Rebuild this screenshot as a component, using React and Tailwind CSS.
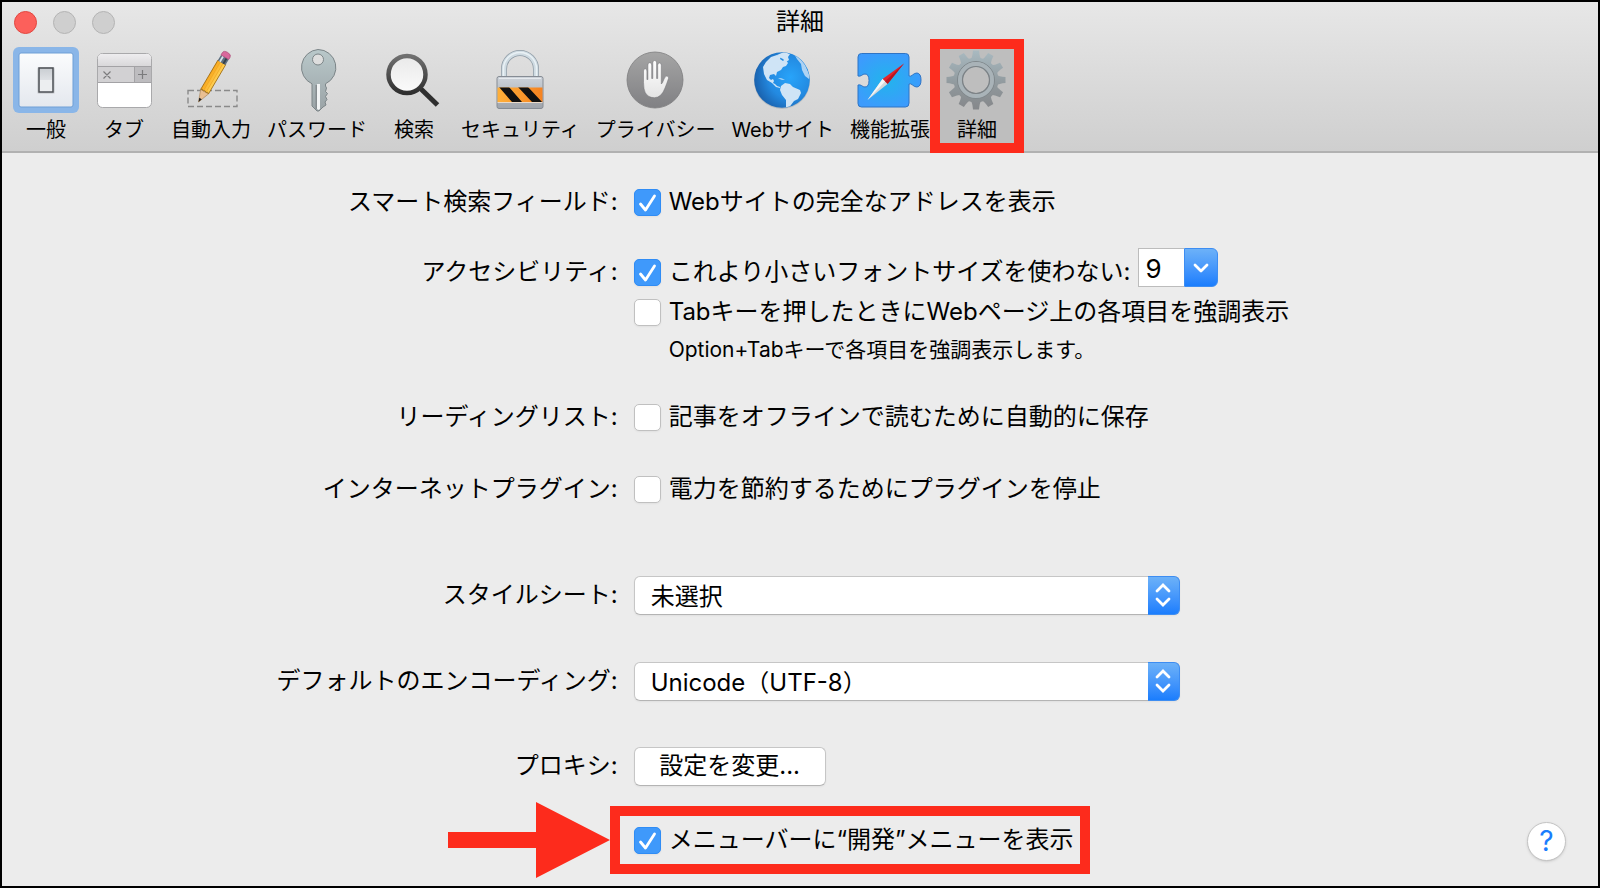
import { useState } from "react"
import clsx from "clsx"

function Icon({ children }) {
  return (
    <svg viewBox="0 0 66 66" className="h-[66px] w-[66px] shrink-0 overflow-visible" aria-hidden="true">
      {children}
    </svg>
  )
}

function Gradient({ id, from, to, x2 = 0, y2 = 1 }) {
  return (
    <linearGradient id={id} x1="0" y1="0" x2={x2} y2={y2}>
      <stop offset="0" stopColor={from} />
      <stop offset="1" stopColor={to} />
    </linearGradient>
  )
}

function GeneralIcon() {
  return (
    <Icon>
      <defs>
        <Gradient id="plate" from="#fbfcfd" to="#e4e8ee" />
        <Gradient id="knob" from="#c9cdd2" to="#f4f5f7" />
      </defs>
      <rect width="66" height="66" rx="6" fill="#8ab6e8" />
      <rect x="6" y="6" width="54" height="54" rx="2" fill="url(#plate)" stroke="#6f9fd6" />
      <rect x="24" y="20" width="18" height="27" rx="2" fill="#c5c8cc" opacity="0.6" />
      <rect x="26" y="21" width="14" height="24" fill="url(#knob)" stroke="#4b4f54" strokeWidth="1.5" />
      <path d="M27 33h12v11H27z" fill="#eceef0" />
    </Icon>
  )
}

function TabsIcon() {
  return (
    <Icon>
      <defs>
        <Gradient id="tabTop" from="#eeedef" to="#d9d8da" />
      </defs>
      <rect x="6.5" y="6.5" width="54" height="54" rx="5" fill="#fff" stroke="#a9a9ab" />
      <path d="M7 19V11q0-4 4-4h45q4 0 4 4v8z" fill="url(#tabTop)" />
      <path d="M7 20h37v15H7z" fill="#d2d1d3" />
      <path d="M44 20h16v15H44z" fill="#bdbcbf" />
      <path d="M7 19.5h53M7 35.5h53M43.500 20v15" stroke="#a3a2a5" fill="none" />
      <path d="M12.500 24.500l7 7m0-7l-7 7M47 27.500h9m-4.500-4.500v9" stroke="#7b7b7d" strokeWidth="1.2" fill="none" />
    </Icon>
  )
}

function AutofillIcon() {
  return (
    <Icon>
      <defs>
        <Gradient id="pencil" from="#f9a71c" to="#ffd257" x2={1} y2={0} />
      </defs>
      <rect x="10" y="43.500" width="49" height="16" fill="none" stroke="#8a8a8a" strokeWidth="1.4" strokeDasharray="6 3" />
      <g transform="translate(20.500 55) rotate(30.500)">
        <path d="M0 0L-4.500-12H4.500z" fill="#e9bf92" stroke="#a9855c" strokeWidth="0.600" />
        <path d="M0 0L-1.500-4H1.500z" fill="#222" />
        <path d="M-4.500-12l1.500-1 1.500 1 1.500-1 1.500 1 1.500-1 1.500 1V-46h-9z" fill="url(#pencil)" stroke="#a06c10" strokeWidth="0.800" />
        <path d="M-1.500-13V-46M1.500-13V-46" stroke="#eda21c" strokeWidth="0.600" />
        <rect x="-4.500" y="-52" width="9" height="6.500" fill="#5d6f80" />
        <path d="M-2-52v6.500" stroke="#d8e2ea" strokeWidth="1.800" />
        <path d="M2-52v6.500" stroke="#35404a" strokeWidth="1.800" />
        <path d="M-4.500-52v-2.500q0-3 4.500-3t4.500 3v2.500z" fill="#d9689c" stroke="#a64370" strokeWidth="0.600" />
      </g>
    </Icon>
  )
}

function PasswordIcon() {
  return (
    <Icon>
      <defs>
        <Gradient id="key" from="#b9c8ca" to="#9aa3a6" />
      </defs>
      <path
        fillRule="evenodd"
        d="M34 2.500a18 18 0 0 1 7.500 34.300V39l1 2-1 3.500 2 2-2 3 1.500 3-2 2.500 1 3-3 2-4 4h-2l-5-5V36.800A18 18 0 0 1 34 2.500zm0 4.500a5.500 5.500 0 1 0 0 11 5.500 5.500 0 0 0 0-11z"
        fill="url(#key)"
        stroke="#7c8588"
      />
      <path d="M31.500 38h1.500v24h-1.500z" fill="#858c8f" />
      <path d="M33 37h3v25l-1.500 1L33 62z" fill="#f1f3f4" />
    </Icon>
  )
}

function SearchIcon() {
  return (
    <Icon>
      <defs>
        <Gradient id="lens" from="#e9e9e9" to="#fbfbfb" />
        <Gradient id="rim" from="#707070" to="#2f2f2f" />
      </defs>
      <path d="M40 42L56.500 58" stroke="#2f2f2f" strokeWidth="5" />
      <circle cx="26" cy="27.500" r="18.500" fill="url(#lens)" stroke="url(#rim)" strokeWidth="4.500" />
    </Icon>
  )
}

function SecurityIcon() {
  return (
    <Icon>
      <defs>
        <Gradient id="lockBody" from="#cdd3da" to="#9fa4ab" />
        <Gradient id="hazard" from="#ffb03a" to="#f58220" x2={1} y2={0} />
        <clipPath id="band">
          <path d="M10.500 40.500h45v14.500h-45z" />
        </clipPath>
      </defs>
      <path d="M17 32V22a16 16 0 0 1 32 0v10" fill="none" stroke="#8f9ba5" strokeWidth="6" />
      <path d="M17 32V22a16 16 0 0 1 32 0v10" fill="none" stroke="#cfdbe2" strokeWidth="4.500" />
      <path d="M16.500 32V22a16.500 16.500 0 0 1 33 0v10" fill="none" stroke="#e9f1f5" strokeWidth="1.500" />
      <rect x="10" y="29.500" width="46" height="32" rx="2" fill="url(#lockBody)" stroke="#868c94" />
      <path d="M12 31.500h42" stroke="#e6eaee" />
      <g clipPath="url(#band)">
        <path d="M10 40h46v15H10z" fill="url(#hazard)" />
        <path d="M12 40h10l13 15H25zM31 40h10l14 15H45z" fill="#111" />
      </g>
      <path d="M10.500 55.500h45" stroke="#e9d9c8" />
    </Icon>
  )
}

function PrivacyIcon() {
  return (
    <Icon>
      <defs>
        <Gradient id="disc" from="#a5a5a5" to="#808083" />
        <Gradient id="palm" from="#fff" to="#e4e4e4" />
      </defs>
      <circle cx="32" cy="33" r="28" fill="url(#disc)" stroke="#7d7d7f" strokeWidth="0.800" />
      <path
        d="M20.500 24q0-2.200 1.700-2.200t1.700 2.200v8.500h1V18q0-2.300 1.900-2.300t1.900 2.300v13.500h1.100V15.800q0-2.300 1.900-2.300t1.900 2.300v15.700h1.100V18.300q0-2.300 1.800-2.300t1.800 2.300V37q1.200-.6 2.300-4 1.500-4.200 3.200-3.900 2.400.2 1.700 2.400-1.500 4.500-3.500 9.500-3.500 9.500-10.500 9.700-6.500 0-9.300-5.200-1.500-3-1.700-10z"
        fill="url(#palm)"
        stroke="#6f6f72"
        strokeWidth="0.500"
      />
    </Icon>
  )
}

function GlobeIcon() {
  return (
    <Icon>
      <defs>
        <radialGradient id="sea" cx="0.650" cy="0.450" r="0.650">
          <stop offset="0" stopColor="#28a4fa" />
          <stop offset="0.600" stopColor="#2389e0" />
          <stop offset="1" stopColor="#1a62ae" />
        </radialGradient>
        <clipPath id="world">
          <circle cx="32" cy="33" r="27.500" />
        </clipPath>
      </defs>
      <circle cx="32" cy="34" r="28" fill="#9aa3ac" opacity="0.500" />
      <circle cx="32" cy="33" r="27.800" fill="url(#sea)" />
      <g clipPath="url(#world)" fill="#cfe4f6">
        <path d="M16 15l5-5 6-2 4 1-1 3 3 2 2-2 3 4-2 3-3 1-2 3-4 2-1 4-2-2-4 1-1 3 2 2 2-1 1 2-1 2 2 1 2 2 3 1v1l-4-1-4-4-5-3-3-6-1-7z" />
        <path d="M27 8l7-3 6 2-2 3 1 3-3 2-3-3-4-2z" />
        <path d="M44 7l5 3 6 8 4 9v5l-4-3-3-6-1-6-4-5z" opacity="0.800" />
        <path d="M28 31l4 .5 3 1.500-4-.5z" />
        <path d="M31 39l4-3 5 1 3 3 7 3 1 3-3 6-4 2-3 4-3 4-2-1v-8l-4-5-2-5z" />
      </g>
    </Icon>
  )
}

function ExtensionsIcon() {
  return (
    <Icon>
      <defs>
        <radialGradient id="piece" cx="0.450" cy="0.500" r="0.550">
          <stop offset="0" stopColor="#22b4ec" />
          <stop offset="1" stopColor="#3c9bfd" />
        </radialGradient>
      </defs>
      <path
        d="M4.500 6.500h44q3.500 0 3.500 3.500v19q1.800.800 3.500-1 2-2 4.500-2 4 .500 4 7t-4 7q-2.500 0-4.500-2-1.700-1.800-3.500-1v19q0 4-3.500 4h-44Q1 60 1 56.500V38q1.800-.500 3.500.500 1.500 1.500 3.500 1.500 4 0 4-6.500T8 27q-2 0-3.500 1.500Q2.800 29.500 1 29V10q0-3.500 3.500-3.500z"
        fill="url(#piece)"
        stroke="#2f74c4"
      />
      <path d="M47 16.500L30.500 37l-5-5z" fill="#e2242c" />
      <path d="M47 16.500L30.500 37l-2.500-2.500z" fill="#b81620" />
      <path d="M10.500 53l15-21 5 5z" fill="#d5d8da" />
      <path d="M10.500 53l15-21 2.500 2.500z" fill="#f6f7f7" />
    </Icon>
  )
}

const gearTeeth = Array.from({ length: 12 }, (_, i) => i * 30)

function AdvancedIcon() {
  return (
    <Icon>
      <defs>
        <linearGradient id="steel" gradientUnits="userSpaceOnUse" x1="0" y1="-30" x2="0" y2="30">
          <stop offset="0" stopColor="#a9bac1" />
          <stop offset="0.6" stopColor="#8f979b" />
          <stop offset="1" stopColor="#85878a" />
        </linearGradient>
        <mask id="gearShape" maskUnits="userSpaceOnUse" x="-32" y="-32" width="64" height="64">
          <g fill="#fff">
            <circle r="22.500" />
            {gearTeeth.map((deg) => (
              <path key={deg} d="M-5.500-20Q-3.500-23-3-29.500H3Q3.500-23 5.500-20z" transform={`rotate(${deg})`} />
            ))}
          </g>
          <circle r="13" fill="#000" />
        </mask>
      </defs>
      <g transform="translate(32 33)">
        <path d="M-32-32h64v64h-64z" fill="url(#steel)" mask="url(#gearShape)" />
        <circle r="18.500" fill="none" stroke="#80888c" />
        <circle r="16" fill="none" stroke="#a9b3b8" strokeWidth="4" />
        <circle r="13.500" fill="none" stroke="#7c8286" strokeWidth="1.200" />
      </g>
    </Icon>
  )
}

const panes = [
  { id: "general", label: "一般", icon: GeneralIcon },
  { id: "tabs", label: "タブ", icon: TabsIcon },
  { id: "autofill", label: "自動入力", icon: AutofillIcon },
  { id: "passwords", label: "パスワード", icon: PasswordIcon },
  { id: "search", label: "検索", icon: SearchIcon },
  { id: "security", label: "セキュリティ", icon: SecurityIcon },
  { id: "privacy", label: "プライバシー", icon: PrivacyIcon },
  { id: "websites", label: "Webサイト", icon: GlobeIcon },
  { id: "extensions", label: "機能拡張", icon: ExtensionsIcon },
  { id: "advanced", label: "詳細", icon: AdvancedIcon },
]

function PaneButton({ pane, highlighted }) {
  const PaneIcon = pane.icon
  return (
    <button type="button" className="relative flex min-w-[62px] shrink-0 flex-col items-center">
      {highlighted && <span className="absolute -inset-x-4 -top-2 -bottom-1.5 border-10 border-[#fd2b1c] bg-[#bebebe]" />}
      <span className="relative -mx-2 flex justify-center">
        <PaneIcon />
      </span>
      <span className="relative text-xl/[34px] whitespace-nowrap">{pane.label}</span>
    </button>
  )
}

function Row({ label, htmlFor, className, children }) {
  return (
    <div className={clsx("grid grid-cols-[7fr_11fr] items-center gap-4 pl-0.5", className)}>
      <div className="self-start text-right leading-9">{label && <label htmlFor={htmlFor}>{label}</label>}</div>
      <div>{children}</div>
    </div>
  )
}

function Checkbox({ id, label, defaultChecked }) {
  return (
    <div className="relative flex h-9 items-center gap-2">
      <span className="relative flex">
        <input
          id={id}
          type="checkbox"
          defaultChecked={defaultChecked}
          className="peer h-[27px] w-[27px] appearance-none rounded-[5px] border border-[#c0c0c0] bg-white shadow-xs checked:border-[#2f8cf5] checked:bg-[#3f99fb]"
        />
        <svg viewBox="0 0 27 27" className="pointer-events-none absolute inset-0 hidden peer-checked:block" aria-hidden="true">
          <path d="M6.500 15l5 6L20.500 7" fill="none" stroke="#fff" strokeWidth="2.800" strokeLinecap="round" strokeLinejoin="round" />
        </svg>
      </span>
      <label htmlFor={id} className="whitespace-nowrap">{label}</label>
    </div>
  )
}

function PopupSelect({ id, options }) {
  return (
    <div className="relative w-[546px]">
      <select
        id={id}
        className="block h-[39px] w-full appearance-none rounded-md border border-[#c6c6c6] border-b-[#b4b4b4] bg-white pr-10 pl-4 shadow-xs"
      >
        {options.map((option) => (
          <option key={option}>{option}</option>
        ))}
      </select>
      <span className="pointer-events-none absolute inset-y-0 right-0 flex w-8 items-center justify-center rounded-r-md border border-l-0 border-[#3d8df2] bg-linear-to-b from-[#6cb1f8] to-[#1a7dfd]">
        <svg viewBox="0 0 16 26" className="h-[26px] w-4" aria-hidden="true">
          <path d="M2 9l6-6 6 6M2 17l6 6 6-6" fill="none" stroke="#fff" strokeWidth="2.800" strokeLinecap="round" />
        </svg>
      </span>
    </div>
  )
}

function MinimumFontSize() {
  const [size, setSize] = useState("9")
  return (
    <div className="-mt-1.5 flex h-[39px]">
      <input
        type="text"
        aria-label="フォントサイズ"
        value={size}
        onChange={(e) => setSize(e.target.value)}
        className="w-[46px] border border-r-0 border-[#bcbcbc] bg-white pt-1 pl-1.5 text-[26px]"
      />
      <button
        type="button"
        aria-label="サイズを選択"
        className="flex w-[34px] items-center justify-center rounded-r-md border border-[#3d8df2] bg-linear-to-b from-[#6cb1f8] to-[#1a7dfd]"
      >
        <svg viewBox="0 0 16 10" className="h-2.5 w-4" aria-hidden="true">
          <path d="M2 2l6 6 6-6" fill="none" stroke="#fff" strokeWidth="2.800" strokeLinecap="round" strokeLinejoin="round" />
        </svg>
      </button>
    </div>
  )
}

function App() {
  return (
    <main className="flex min-h-screen flex-col border-2 border-black bg-[#ececec] font-['Inter','Noto_Sans_CJK_JP',sans-serif] text-2xl text-black">
      <header className="border-b-2 border-[#b1b1b1] bg-linear-to-b from-[#e7e7e7] to-[#cfcfcf]">
        <div className="grid h-10 grid-cols-[1fr_auto_1fr] items-center px-3">
          <div className="flex gap-4">
            <button type="button" aria-label="閉じる" className="h-[23px] w-[23px] rounded-full border border-[#e2463f] bg-[#fc605b]" />
            <button type="button" aria-label="しまう" className="h-[23px] w-[23px] rounded-full border border-[#b4b4b4] bg-[#cfcfcf]" />
            <button type="button" aria-label="拡大" className="h-[23px] w-[23px] rounded-full border border-[#b4b4b4] bg-[#cfcfcf]" />
          </div>
          <h1>詳細</h1>
        </div>
        <nav className="flex gap-4 px-[13px] pt-[5px] pb-1">
          {panes.map((pane) => (
            <PaneButton key={pane.id} pane={pane} highlighted={pane.id === "advanced"} />
          ))}
        </nav>
      </header>

      <form className="relative flex-1 pt-[31px] pb-6" onSubmit={(e) => e.preventDefault()}>
        <Row label="スマート検索フィールド:" htmlFor="full-address">
          <Checkbox id="full-address" label="Webサイトの完全なアドレスを表示" defaultChecked />
        </Row>

        <Row label="アクセシビリティ:" htmlFor="min-font" className="mt-8.5">
          <div className="flex h-9 gap-2">
            <Checkbox id="min-font" label="これより小さいフォントサイズを使わない:" defaultChecked />
            <MinimumFontSize />
          </div>
          <div className="mt-1">
            <Checkbox id="tab-highlight" label="Tabキーを押したときにWebページ上の各項目を強調表示" />
          </div>
          <p className="mt-0.5 pl-[35px] text-[21px]/9">Option+Tabキーで各項目を強調表示します。</p>
        </Row>

        <Row label="リーディングリスト:" htmlFor="offline" className="mt-[31px]">
          <Checkbox id="offline" label="記事をオフラインで読むために自動的に保存" />
        </Row>

        <Row label="インターネットプラグイン:" htmlFor="plugins" className="mt-9">
          <Checkbox id="plugins" label="電力を節約するためにプラグインを停止" />
        </Row>

        <Row label="スタイルシート:" htmlFor="stylesheet" className="mt-17 *:leading-10">
          <PopupSelect id="stylesheet" options={["未選択"]} />
        </Row>

        <Row label="デフォルトのエンコーディング:" htmlFor="encoding" className="mt-[46px] *:leading-10">
          <PopupSelect id="encoding" options={["Unicode（UTF-8）"]} />
        </Row>

        <Row label="プロキシ:" htmlFor="proxy" className="mt-[45px] *:leading-10">
          <button id="proxy" type="button" className="block h-[39px] w-48 rounded-md border border-[#c6c6c6] border-b-[#b4b4b4] bg-white leading-9 shadow-xs">
            設定を変更...
          </button>
        </Row>

        <Row className="mt-9">
          <div className="relative w-max">
            <Checkbox id="develop-menu" label="メニューバーに“開発”メニューを表示" defaultChecked />
            <span className="pointer-events-none absolute -inset-y-4 -right-4 -left-6 border-10 border-[#fd2b1c]" />
            <svg viewBox="0 0 162 76" className="absolute top-1/2 right-full mr-6 h-[76px] w-[162px] -translate-y-1/2" aria-hidden="true">
              <path d="M0 30h88V0l74 38-74 38V46H0z" fill="#fd2b1c" />
            </svg>
          </div>
        </Row>

        <button
          type="button"
          aria-label="ヘルプ"
          className="absolute right-8 bottom-[25px] flex h-[39px] w-[39px] items-center justify-center rounded-full border border-[#c4c4c4] bg-white text-[28px] text-[#1a7dfd] shadow-sm"
        >
          ?
        </button>
      </form>
    </main>
  )
}

export default App
